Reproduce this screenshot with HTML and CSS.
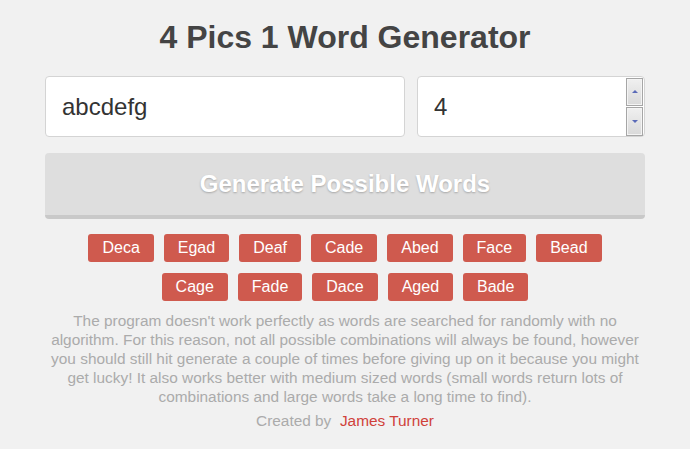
FILE: index.html
```html
<!DOCTYPE html>
<html>
<head>
<meta charset="utf-8">
<link rel="stylesheet" href="styles.css">
</head>
<body>
<div class="wrap">
  <h1 class="title">4 Pics 1 Word Generator</h1>
  <div class="inputs">
    <div class="field field-letters"><span class="value">abcdefg</span></div>
    <div class="field field-count">
      <span class="value">4</span>
      <div class="spinner">
        <div class="spin-btn"><span class="arrow up"></span></div>
        <div class="spin-btn"><span class="arrow down"></span></div>
      </div>
    </div>
  </div>
  <button class="generate">Generate Possible Words</button>
  <div class="tags">
    <span class="tag">Deca</span>
    <span class="tag">Egad</span>
    <span class="tag">Deaf</span>
    <span class="tag">Cade</span>
    <span class="tag">Abed</span>
    <span class="tag">Face</span>
    <span class="tag">Bead</span>
    <span class="tag">Cage</span>
    <span class="tag">Fade</span>
    <span class="tag">Dace</span>
    <span class="tag">Aged</span>
    <span class="tag">Bade</span>
  </div>
  <p class="note">The program doesn't work perfectly as words are searched for randomly with no algorithm. For this reason, not all possible combinations will always be found, however you should still hit generate a couple of times before giving up on it because you might get lucky! It also works better with medium sized words (small words return lots of combinations and large words take a long time to find).</p>
  <p class="credit">Created by&nbsp; <a class="author" href="#">James Turner</a></p>
</div>
</body>
</html>
```
FILE: styles.css
```css
html, body {
  margin: 0;
  padding: 0;
  background: #f1f1f1;
}
body {
  font-family: "Liberation Sans", Arial, sans-serif;
}
.wrap {
  width: 600px;
  margin: 0 auto;
  padding-top: 19px;
}
.title {
  margin: 0;
  font-size: 32px;
  line-height: 37px;
  font-weight: bold;
  color: #444;
  text-align: center;
}
.inputs {
  display: flex;
  gap: 12px;
  margin-top: 20px;
}
.field {
  box-sizing: border-box;
  height: 61px;
  background: #fff;
  border: 1px solid #d4d4d4;
  border-radius: 4px;
  display: flex;
  align-items: center;
  padding-left: 16px;
  font-size: 24px;
  color: #333;
}
.field-letters {
  width: 360px;
}
.field-count {
  flex: 1;
  padding-right: 1px;
}
.field-count .value {
  flex: 1;
}
.spinner {
  width: 17px;
  height: 58px;
  display: flex;
  flex-direction: column;
  gap: 1px;
}
.spin-btn {
  flex: 1;
  box-sizing: border-box;
  border: 1px solid #a6a6a6;
  box-shadow: inset 0 0 0 1px #f4f4f4;
  background: linear-gradient(#f0f0f0, #d9d9d9);
  display: flex;
  align-items: center;
  justify-content: center;
}
.arrow {
  width: 0;
  height: 0;
  border-left: 3px solid transparent;
  border-right: 3px solid transparent;
}
.arrow.up {
  border-bottom: 3px solid #5a6ab8;
}
.arrow.down {
  border-top: 3px solid #5a6ab8;
}
.generate {
  display: block;
  width: 600px;
  height: 66px;
  margin-top: 16px;
  box-sizing: border-box;
  border: none;
  border-bottom: 4px solid #c9c9c9;
  border-radius: 4px;
  background: #dedede;
  color: #fff;
  font-family: "Liberation Sans", Arial, sans-serif;
  font-size: 24px;
  font-weight: bold;
  text-shadow: 0 1px 2px rgba(0, 0, 0, 0.25);
  padding: 0;
}
.tags {
  display: flex;
  flex-wrap: wrap;
  justify-content: center;
  column-gap: 10px;
  row-gap: 11px;
  margin-top: 15px;
  padding: 0 40px;
}
.tag {
  background: #cf5a4e;
  color: #fff;
  font-size: 16px;
  line-height: 18px;
  padding: 5px 14px;
  border-radius: 3px;
}
.note {
  margin: 10px 0 0;
  font-size: 15.4px;
  line-height: 19px;
  color: #ababab;
  text-align: center;
}
.credit {
  margin: 5px 0 0;
  font-size: 15.4px;
  line-height: 19px;
  color: #ababab;
  text-align: center;
}
.author {
  color: #d0413a;
  text-decoration: none;
}
```
